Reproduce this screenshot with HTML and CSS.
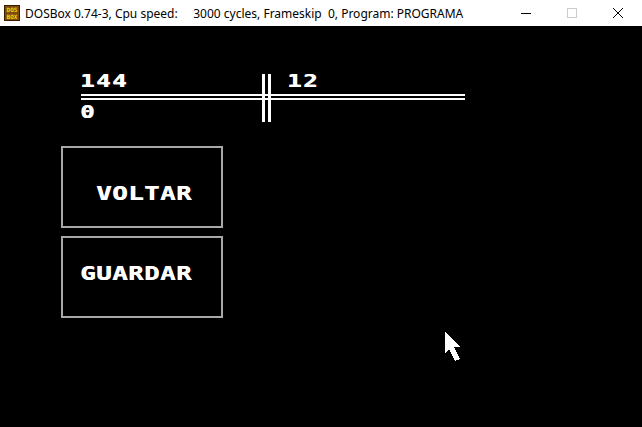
FILE: index.html
```html
<!DOCTYPE html>
<html lang="pt">
<head>
<meta charset="utf-8">
<title>DOSBox</title>
<link rel="stylesheet" href="styles.css">
</head>
<body>
<div class="window">
  <header class="titlebar">
    <svg class="app-icon" viewBox="0 0 16 16" width="16" height="16">
      <rect x="0.5" y="0.5" width="15" height="15" fill="#7d4a12" stroke="#3a1d00"/>
      <text x="8" y="7" class="icon-text">DOS</text>
      <text x="8" y="14" class="icon-text">BOX</text>
    </svg>
    <span class="title">DOSBox 0.74-3, Cpu speed:     3000 cycles, Frameskip  0, Program: PROGRAMA</span>
    <div class="controls">
      <span class="ctl">
        <svg viewBox="0 0 10 10" width="10" height="10"><line x1="0" y1="5.5" x2="10" y2="5.5" stroke="#000" stroke-width="1"/></svg>
      </span>
      <span class="ctl">
        <svg viewBox="0 0 10 10" width="10" height="10"><rect x="0.5" y="0.5" width="9" height="9" fill="none" stroke="#cccccc" stroke-width="1"/></svg>
      </span>
      <span class="ctl">
        <svg viewBox="0 0 10 10" width="10" height="10"><path d="M0 0 L10 10 M10 0 L0 10" stroke="#000" stroke-width="1"/></svg>
      </span>
    </div>
  </header>
  <main class="screen">
    <div class="board">
      <span class="num score-a">144</span>
      <span class="num score-b">12</span>
      <span class="hline hline-1"></span>
      <span class="hline hline-2"></span>
      <span class="num score-c">0</span>
      <span class="vline vline-1"></span>
      <span class="vline vline-2"></span>
    </div>
    <div class="menu">
      <div class="btn btn-voltar"><span class="label">VOLTAR</span></div>
      <div class="btn btn-guardar"><span class="label">GUARDAR</span></div>
    </div>
    <svg class="cursor" viewBox="0 0 20 32" width="20" height="32" shape-rendering="crispEdges">
      <polygon points="1,1 1,22 5,18 11,30 16,28 10,16 16,16" fill="#fff"/>
    </svg>
  </main>
</div>
</body>
</html>
```

FILE: styles.css
```css
html, body {
  margin: 0;
  padding: 0;
  background: #000;
}

body {
  width: 642px;
  height: 427px;
  overflow: hidden;
}

.window {
  display: flex;
  flex-direction: column;
  height: 427px;
}

/* ---------- title bar ---------- */
.titlebar {
  flex: none;
  height: 26px;
  background: #fff;
  display: flex;
  align-items: center;
}

.app-icon {
  flex: none;
  margin-left: 4px;
  margin-right: 5px;
}

.icon-text {
  font-family: "DejaVu Sans Mono", monospace;
  font-weight: bold;
  font-size: 6px;
  fill: #ffd200;
  text-anchor: middle;
}

.title {
  flex: 1;
  font-family: "Noto Sans", "Liberation Sans", sans-serif;
  font-size: 12px;
  color: #000;
  white-space: pre;
}

.controls {
  display: flex;
  align-self: stretch;
  margin-right: 1px;
}

.ctl {
  width: 46px;
  display: flex;
  align-items: center;
  justify-content: center;
}

.ctl svg {
  display: block;
}

/* ---------- DOS screen ---------- */
.screen {
  flex: 1;
  position: relative;
  background: #000;
  padding-top: 48px;
}

.board {
  display: grid;
  grid-template-columns: 181px 3px 3px 3px 1fr;
  grid-template-rows: 20px 2px 2px 2px 22px;
  width: 384px;
  margin-left: 81px;
}

.num {
  display: inline-block;
  justify-self: start;
  align-self: start;
  font-family: "DejaVu Sans Mono", monospace;
  font-weight: bold;
  font-size: 17px;
  line-height: 15px;
  letter-spacing: 1.2px;
  color: #fff;
  text-shadow: 0.6px 0 0 #fff;
  transform: scaleX(1.4);
  transform-origin: left top;
}

.score-a {
  grid-row: 1;
  grid-column: 1;
  margin-left: -1px;
}

.score-b {
  grid-row: 1;
  grid-column: 5;
  margin-left: 16px;
}

.score-c {
  grid-row: 5;
  grid-column: 1;
  margin-left: -1px;
  margin-top: 5px;
}

.hline {
  background: #fff;
  grid-column: 1 / -1;
}

.hline-1 { grid-row: 2; }
.hline-2 { grid-row: 4; }

.vline {
  background: #fff;
  grid-row: 1 / -1;
}

.vline-1 { grid-column: 2; }
.vline-2 { grid-column: 4; }

/* ---------- menu buttons ---------- */
.menu {
  display: flex;
  flex-direction: column;
  gap: 8px;
  margin-top: 24px;
  margin-left: 61px;
  width: 162px;
}

.btn {
  box-sizing: border-box;
  height: 82px;
  border: 2px solid #a8a8a8;
}

.btn-voltar {
  padding: 36px 0 0 33px;
}

.btn-guardar {
  padding: 26px 0 0 17px;
}

.label {
  display: inline-block;
  font-family: "DejaVu Sans Mono", monospace;
  font-weight: bold;
  font-size: 19px;
  line-height: 19px;
  letter-spacing: 0.4px;
  color: #fff;
  text-shadow: 0.5px 0 0 #fff;
  transform: scaleX(1.35);
  transform-origin: left top;
}

/* ---------- mouse pointer ---------- */
.cursor {
  position: absolute;
  left: 444px;
  top: 305px;
}
```
